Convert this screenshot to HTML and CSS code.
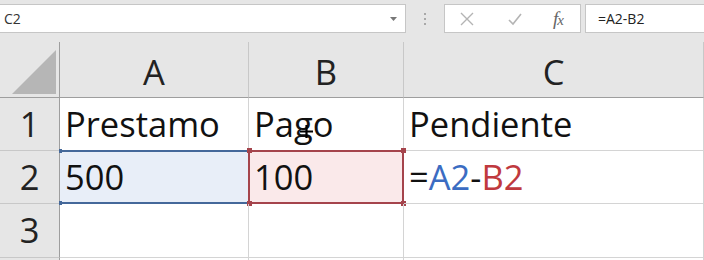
FILE: index.html
```html
<!DOCTYPE html>
<html lang="es">
<head>
    <meta charset="UTF-8">
    <title>Hoja de cálculo</title>
    <link rel="stylesheet" href="styles.css">
</head>
<body>
    <div class="formula-bar">
        <div class="name-box">
            <span>C2</span>
            <svg class="caret" width="7" height="4" viewBox="0 0 7 4"><path d="M0 0h7L3.5 4z" fill="#777"/></svg>
        </div>
        <div class="grip">
            <i></i><i></i><i></i>
        </div>
        <div class="fx-buttons">
            <svg class="btn-icon" width="16" height="16" viewBox="0 0 16 16"><path d="M2 2l12 12M14 2L2 14" stroke="#b4b4b4" stroke-width="1.4" fill="none"/></svg>
            <svg class="btn-icon" width="16" height="16" viewBox="0 0 16 16"><path d="M2 9l4 4L14 3" stroke="#b4b4b4" stroke-width="1.6" fill="none"/></svg>
            <span class="fx">f<span class="fx-x">x</span></span>
        </div>
        <div class="formula-input">=A2-B2</div>
    </div>

    <div class="sheet">
        <div class="corner">
            <svg width="59" height="55" viewBox="0 0 59 55"><path d="M56 8V52H12z" fill="#b6b6b6"/></svg>
        </div>
        <div class="col-head">A</div>
        <div class="col-head">B</div>
        <div class="col-head">C</div>

        <div class="row-head">1</div>
        <div class="cell">Prestamo</div>
        <div class="cell cursor-cell">Pago
            <svg class="cursor" width="13" height="13" viewBox="0 0 13 13"><path d="M6.5 0v13M0 6.5h13" stroke="#000" stroke-width="2.2"/></svg>
        </div>
        <div class="cell">Pendiente</div>

        <div class="row-head">2</div>
        <div class="cell ref-blue">500
            <span class="ref"></span>
            <span class="handle tl"></span><span class="handle bl"></span>
        </div>
        <div class="cell ref-red">100
            <span class="ref"></span>
            <span class="handle tl"></span><span class="handle bl"></span>
            <span class="handle tr"></span><span class="handle br"></span>
        </div>
        <div class="cell">=<span class="txt-blue">A2</span>-<span class="txt-red">B2</span></div>

        <div class="row-head">3</div>
        <div class="cell"></div>
        <div class="cell"></div>
        <div class="cell"></div>

        <div class="row-head stub"></div>
        <div class="cell stub"></div>
        <div class="cell stub"></div>
        <div class="cell stub"></div>
    </div>
</body>
</html>
```

FILE: styles.css
```css
body {
    margin: 0;
    width: 704px;
    height: 260px;
    overflow: hidden;
    background-color: #fff;
    font-family: "Open Sans", "Noto Sans", sans-serif;
}

/* barra de fórmulas */
.formula-bar {
    display: flex;
    align-items: flex-start;
    height: 42px;
    padding-top: 4px;
    box-sizing: border-box;
    background-color: #e6e6e6;
}
.name-box {
    display: flex;
    align-items: center;
    justify-content: space-between;
    width: 407px;
    height: 29px;
    margin-left: -1px;
    padding: 0 8px 0 4px;
    box-sizing: border-box;
    background-color: #fff;
    border: 1px solid #c6c6c6;
    font-size: 14px;
    color: #333;
}
.grip {
    display: flex;
    flex-direction: column;
    align-items: center;
    gap: 3px;
    width: 38px;
    padding-top: 9px;
}
.grip i {
    width: 2px;
    height: 2px;
    background-color: #a8a8a8;
}
.fx-buttons {
    display: flex;
    align-items: center;
    width: 137px;
    height: 29px;
    box-sizing: border-box;
    padding-left: 14px;
    background-color: #fff;
    border: 1px solid #c6c6c6;
}
.btn-icon {
    margin-right: 32px;
}
.fx {
    margin-left: -2px;
    font-family: "Liberation Serif", serif;
    font-style: italic;
    font-size: 19px;
    color: #666;
    letter-spacing: -1px;
}
.fx-x {
    font-size: 15px;
}
.formula-input {
    flex: 1;
    height: 29px;
    margin-left: 4px;
    margin-right: -2px;
    padding-left: 12px;
    box-sizing: border-box;
    background-color: #fff;
    border: 1px solid #c6c6c6;
    font-size: 14px;
    line-height: 27px;
    color: #222;
}

/* hoja */
.sheet {
    display: grid;
    grid-template-columns: 60px 189px 155px 1fr;
    grid-template-rows: 56px 53px 53px 54px 2px;
    font-size: 34.5px;
}
.corner,
.col-head,
.row-head {
    background-color: #e6e6e6;
    color: #222;
}
.corner {
    border-right: 1px solid #9e9e9e;
    border-bottom: 1px solid #9e9e9e;
}
.corner svg {
    display: block;
}
.col-head {
    text-align: center;
    line-height: 60px;
    border-right: 1px solid #c8c8c8;
    border-bottom: 1px solid #9e9e9e;
}
.row-head {
    text-align: center;
    line-height: 52px;
    border-right: 1px solid #9e9e9e;
    border-bottom: 1px solid #c8c8c8;
}
.cell {
    position: relative;
    padding-left: 5px;
    line-height: 52px;
    color: #111;
    border-right: 1px solid #d4d4d4;
    border-bottom: 1px solid #d4d4d4;
    white-space: nowrap;
}
.stub {
    border-bottom: none;
    overflow: hidden;
}

/* rangos de referencia */
.ref {
    position: absolute;
    top: -1px;
    bottom: -1px;
    left: -1px;
    right: -1px;
}
.ref-blue {
    background-color: #e8eef8;
}
.ref-blue .ref {
    border-top: 2px solid #44689a;
    border-bottom: 2px solid #44689a;
}
.ref-red {
    background-color: #fae9ea;
}
.ref-red .ref {
    border: 2px solid #a5444c;
}
.handle {
    position: absolute;
    width: 5px;
    height: 5px;
}
.ref-blue .handle {
    width: 3px;
    height: 4px;
    background-color: #44689a;
}
.ref-red .handle {
    background-color: #a5444c;
}
.handle.tl { top: -3px; left: -2px; }
.handle.bl { bottom: -3px; left: -2px; }
.handle.tr { top: -3px; right: -3px; }
.handle.br { bottom: -3px; right: -3px; }
.ref-blue .handle.tl { top: -2px; left: -1px; }
.ref-blue .handle.bl { bottom: -2px; left: -1px; }

.txt-blue {
    color: #3b6cc2;
}
.txt-red {
    color: #c0393e;
}

.cursor {
    position: absolute;
    left: 51px;
    top: 27px;
}
```
